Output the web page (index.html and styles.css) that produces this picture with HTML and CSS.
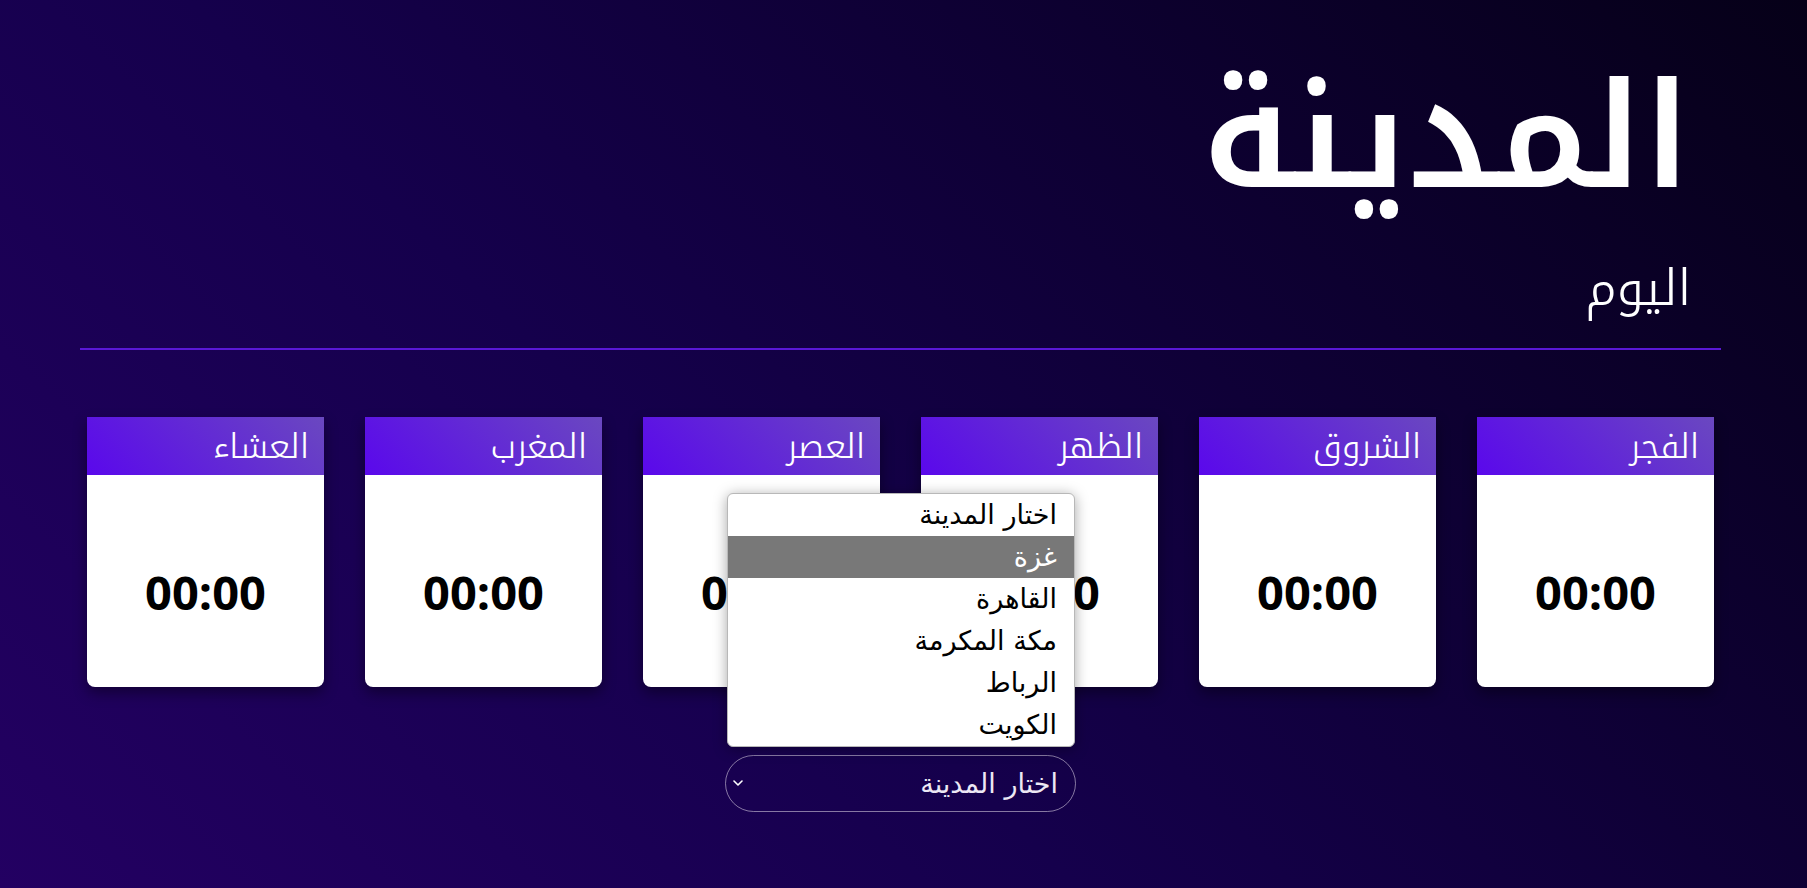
FILE: index.html
```html
<!DOCTYPE html>
<html lang="ar" dir="rtl">
<head>
<meta charset="utf-8">
<title>مواقيت الصلاة</title>
<link rel="stylesheet" href="styles.css">
</head>
<body>
<main class="page">
  <header class="head">
    <h1 class="city">المدينة</h1>
    <p class="day">اليوم</p>
  </header>
  <hr class="rule">
  <section class="cards">
    <div class="card"><div class="card-head">الفجر</div><div class="card-time">00:00</div></div>
    <div class="card"><div class="card-head">الشروق</div><div class="card-time">00:00</div></div>
    <div class="card"><div class="card-head">الظهر</div><div class="card-time">00:00</div></div>
    <div class="card"><div class="card-head">العصر</div><div class="card-time">00:00</div></div>
    <div class="card"><div class="card-head">المغرب</div><div class="card-time">00:00</div></div>
    <div class="card"><div class="card-head">العشاء</div><div class="card-time">00:00</div></div>
  </section>
  <div class="picker">
    <div class="select">
      <span class="select-text">اختار المدينة</span>
      <svg class="chev" width="10" height="6" viewBox="0 0 10 6"><path d="M1 1 L5 5 L9 1" fill="none" stroke="#fff" stroke-width="1.6" stroke-linecap="round" stroke-linejoin="round"/></svg>
    </div>
    <ul class="menu">
      <li class="opt">اختار المدينة</li>
      <li class="opt opt-active">غزة</li>
      <li class="opt">القاهرة</li>
      <li class="opt">مكة المكرمة</li>
      <li class="opt">الرباط</li>
      <li class="opt">الكويت</li>
    </ul>
  </div>
</main>
</body>
</html>
```
FILE: styles.css
```css
html, body {
  margin: 0;
  padding: 0;
}
body {
  min-height: 100vh;
  background: linear-gradient(45deg, #230062 0%, #15004c 40%, #060018 100%);
  font-family: "Noto Kufi Arabic", "Noto Sans Arabic", "Noto Sans", "DejaVu Sans", sans-serif;
  color: #fff;
}
.page {
  padding: 0 86px 0 80px;
}
.head {
  padding-right: 30px;
  text-align: right;
}
.city {
  margin: 0;
  padding-top: 44px;
  font-size: 146px;
  line-height: 190px;
  font-weight: 600;
}
.day {
  margin: 15px 0 0;
  font-size: 50px;
  line-height: 80px;
  font-weight: 300;
}
.rule {
  margin: 19px 0 0;
  border: 0;
  height: 2px;
  background: #5a18d6;
}
.cards {
  display: flex;
  gap: 41px;
  padding: 0 7px;
  margin-top: 67px;
}
.card {
  width: 237px;
  height: 270px;
  background: #fff;
  border-radius: 0 0 8px 8px;
  overflow: hidden;
  box-shadow: 0 6px 14px rgba(0, 0, 0, 0.4);
  display: flex;
  flex-direction: column;
}
.card-head {
  height: 58px;
  line-height: 60px;
  padding: 0 15px;
  font-size: 34px;
  font-weight: 300;
  color: #fff;
  background: linear-gradient(45deg, #5a08ec 0%, #6a48c0 100%);
}
.card-time {
  flex: 1;
  display: flex;
  align-items: center;
  justify-content: center;
  padding-top: 22px;
  color: #000;
  font-family: "Open Sans", "Noto Sans", sans-serif;
  font-weight: 700;
  font-size: 47px;
  direction: ltr;
}
.picker {
  position: relative;
  width: 351px;
  margin: 68px auto 0;
}
.select {
  box-sizing: border-box;
  height: 57px;
  border: 1px solid rgba(210, 200, 220, 0.6);
  border-radius: 29px;
  display: flex;
  align-items: center;
  justify-content: space-between;
  padding: 0 17px 0 7px;
}
.select-text {
  font-family: "DejaVu Sans", sans-serif;
  font-size: 27px;
  color: #ece8f4;
}
.chev {
  margin-bottom: 2px;
}
.menu {
  position: absolute;
  left: 2px;
  bottom: calc(100% + 8px);
  width: 348px;
  box-sizing: border-box;
  margin: 0;
  padding: 0;
  list-style: none;
  background: #fff;
  border: 1px solid #b8b8b8;
  border-radius: 6px;
  overflow: hidden;
  box-shadow: 0 2px 14px rgba(0, 0, 0, 0.35);
}
.opt {
  height: 42px;
  line-height: 42px;
  padding: 0 17px;
  font-family: "DejaVu Sans", sans-serif;
  font-size: 27px;
  color: #000;
}
.opt-active {
  background: #787878;
  color: #fff;
}
```
